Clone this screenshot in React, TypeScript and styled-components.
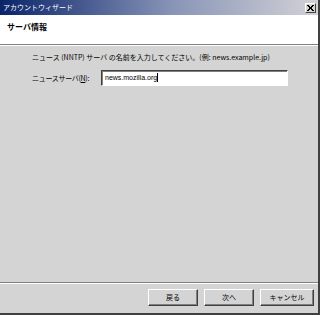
import React from 'react';
import styled, { createGlobalStyle } from 'styled-components';

const GlobalStyle = createGlobalStyle`
  html, body {
    margin: 0;
    padding: 0;
    background: #d4d4d4;
  }
  body {
    font-family: "Noto Sans CJK JP", "DejaVu Sans", sans-serif;
    font-size: 7px;
  }
`;

const Window = styled.div`
  width: 320px;
  height: 315px;
  box-sizing: border-box;
  background: #d4d4d4;
  border-right: 2px solid #404040;
  border-bottom: 2px solid #404040;
  display: flex;
  flex-direction: column;
`;

const TitleBar = styled.div`
  height: 15px;
  flex: none;
  display: flex;
  align-items: center;
  justify-content: space-between;
  padding: 0 2px 0 3px;
  background: linear-gradient(to right, #0a246a, #8a96b8 55%, #d2d2d6);
  color: #fff;
  font-size: 7px;
  line-height: 15px;
  white-space: nowrap;
`;

const CloseButton = styled.div`
  width: 11px;
  height: 10px;
  box-sizing: border-box;
  background: #d4d4d4;
  border: 1px solid;
  border-color: #fff #404040 #404040 #fff;
  display: flex;
  align-items: center;
  justify-content: center;
`;

const Header = styled.div`
  height: 30px;
  flex: none;
  background: #fff;
  border-bottom: 1px solid #808080;
  padding: 5px 0 0 7px;
  box-sizing: border-box;
  font-weight: bold;
  font-size: 8px;
  line-height: 14px;
  color: #000;
`;

const Body = styled.div`
  flex: 1;
  border-top: 1px solid #fff;
  padding: 5px 0 0 32px;
  display: flex;
  flex-direction: column;
  gap: 7px;
  color: #000;
`;

const Prompt = styled.div`
  font-size: 7px;
  line-height: 12px;
  white-space: nowrap;
`;

const FieldRow = styled.div`
  display: flex;
  align-items: center;
`;

const Label = styled.label`
  width: 69px;
  font-size: 7px;
  letter-spacing: -0.3px;
  white-space: nowrap;
  u {
    text-decoration: underline;
  }
`;

const TextInput = styled.div`
  width: 187px;
  height: 16px;
  box-sizing: border-box;
  background: #fff;
  border: 1px solid;
  border-color: #404040 #fff #fff #404040;
  box-shadow: inset 1px 1px 0 #808080;
  font-family: "Liberation Sans", sans-serif;
  font-size: 7px;
  line-height: 14px;
  padding-left: 3px;
  color: #000;
  white-space: nowrap;
`;

const Caret = styled.span`
  display: inline-block;
  width: 1px;
  height: 9px;
  background: #000;
  vertical-align: -2px;
`;

const Footer = styled.div`
  flex: none;
  border-top: 1px solid #808080;
  box-shadow: inset 0 1px 0 #fff;
  height: 31px;
  display: flex;
  justify-content: flex-end;
  align-items: center;
  gap: 6px;
  padding: 0 4px 2px 0;
  box-sizing: border-box;
`;

const Button = styled.button<{ $w: number }>`
  width: ${(p) => p.$w}px;
  height: 17px;
  box-sizing: border-box;
  background: #d4d4d4;
  border: 1px solid;
  border-color: #fff #404040 #404040 #fff;
  box-shadow: inset -1px -1px 0 #808080;
  font-family: "Noto Sans CJK JP", sans-serif;
  font-size: 7px;
  line-height: 14px;
  padding: 0;
  color: #000;
`;

export default function App() {
  return (
    <>
      <GlobalStyle />
      <Window>
        <TitleBar>
          <span>アカウントウィザード</span>
          <CloseButton>
            <svg width="7" height="6" viewBox="0 0 7 6">
              <path d="M0 0L6 6M1 0L7 6M6 0L0 6M7 0L1 6" stroke="#000" strokeWidth="1" />
            </svg>
          </CloseButton>
        </TitleBar>
        <Header>サーバ情報</Header>
        <Body>
          <Prompt>ニュース (NNTP) サーバ の名前を入力してください。(例: news.example.jp)</Prompt>
          <FieldRow>
            <Label>
              ニュースサーバ(<u>N</u>):
            </Label>
            <TextInput>
              news.mozilla.org
              <Caret />
            </TextInput>
          </FieldRow>
        </Body>
        <Footer>
          <Button $w={50}>戻る</Button>
          <Button $w={50}>次へ</Button>
          <Button $w={54}>キャンセル</Button>
        </Footer>
      </Window>
    </>
  );
}
